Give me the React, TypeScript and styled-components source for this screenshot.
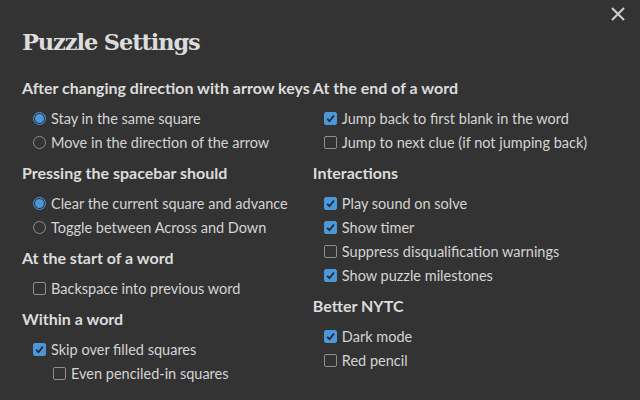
import styled, { createGlobalStyle } from "styled-components";

const GlobalStyle = createGlobalStyle`
    html, body {
        margin: 0;
        padding: 0;
        background: #333333;
    }
`

const Modal = styled.div`
    position: relative;
    box-sizing: border-box;
    width: 640px;
    height: 400px;
    background: #333333;
    color: #dcdcdc;
    padding: 25px 22px 0 22px;
    font-family: Lato, "Liberation Sans", sans-serif;
    overflow: hidden;
`

const Close = styled.button`
    position: absolute;
    top: 6px;
    right: 14px;
    width: 16px;
    height: 16px;
    padding: 0;
    border: none;
    background: transparent;
    cursor: pointer;
`

const Title = styled.h1`
    margin: 0 0 17px 0;
    font-family: "DejaVu Serif", serif;
    font-weight: 700;
    font-size: 22.5px;
    letter-spacing: -1.1px;
    line-height: 34px;
    color: #dcdcdc;
`

const Columns = styled.div`
    display: flex;
    flex-direction: row;
    align-items: flex-start;
    gap: 3px;
`

const Column = styled.div`
    display: flex;
    flex-direction: column;
`

const Heading = styled.h2`
    margin: 0;
    font-family: Lato, "Liberation Sans", sans-serif;
    font-weight: 700;
    font-size: 16px;
    line-height: 24px;
    color: #dcdcdc;
    white-space: nowrap;
`

const Group = styled.div`
    display: flex;
    flex-direction: column;
    padding: 6px 0 7px 11px;
`

const Option = styled.label<{ $nested?: boolean }>`
    display: flex;
    flex-direction: row;
    align-items: center;
    gap: 5px;
    height: 24px;
    margin-left: ${p => p.$nested ? "20px" : "0"};
    font-size: 14.5px;
    color: #d4d4d4;
    white-space: nowrap;
`

const Box = styled.span<{ $checked?: boolean }>`
    box-sizing: border-box;
    display: inline-flex;
    align-items: center;
    justify-content: center;
    width: 13px;
    height: 13px;
    border-radius: 2px;
    border: 1px solid ${p => p.$checked ? "#4b97d9" : "#8f8f8f"};
    background: ${p => p.$checked ? "#4b97d9" : "transparent"};
    flex-shrink: 0;
`

const Radio = styled.span<{ $checked?: boolean }>`
    box-sizing: border-box;
    display: inline-flex;
    align-items: center;
    justify-content: center;
    width: 13px;
    height: 13px;
    border-radius: 50%;
    border: 1px solid ${p => p.$checked ? "#4b97d9" : "#8f8f8f"};
    flex-shrink: 0;

    &::after {
        content: "";
        display: ${p => p.$checked ? "block" : "none"};
        width: 9px;
        height: 9px;
        border-radius: 50%;
        background: #4b97d9;
    }
`

type Item = { label: string, checked?: boolean, nested?: boolean }
type Section = { title: string, kind: "radio" | "check", items: Item[] }

const left: Section[] = [
    { title: "After changing direction with arrow keys", kind: "radio", items: [
        { label: "Stay in the same square", checked: true },
        { label: "Move in the direction of the arrow" },
    ]},
    { title: "Pressing the spacebar should", kind: "radio", items: [
        { label: "Clear the current square and advance", checked: true },
        { label: "Toggle between Across and Down" },
    ]},
    { title: "At the start of a word", kind: "check", items: [
        { label: "Backspace into previous word" },
    ]},
    { title: "Within a word", kind: "check", items: [
        { label: "Skip over filled squares", checked: true },
        { label: "Even penciled-in squares", nested: true },
    ]},
]

const right: Section[] = [
    { title: "At the end of a word", kind: "check", items: [
        { label: "Jump back to first blank in the word", checked: true },
        { label: "Jump to next clue (if not jumping back)" },
    ]},
    { title: "Interactions", kind: "check", items: [
        { label: "Play sound on solve", checked: true },
        { label: "Show timer", checked: true },
        { label: "Suppress disqualification warnings" },
        { label: "Show puzzle milestones", checked: true },
    ]},
    { title: "Better NYTC", kind: "check", items: [
        { label: "Dark mode", checked: true },
        { label: "Red pencil" },
    ]},
]

const Check = () => (
    <svg width="9" height="9" viewBox="0 0 9 9">
        <path d="M1.2 4.8 L3.5 7.2 L7.9 1.6" fill="none" stroke="#1f2a36" strokeWidth="1.8" />
    </svg>
)

const SectionBlock = ({ section }: { section: Section }) => (
    <>
        <Heading>{section.title}</Heading>
        <Group>
            {section.items.map(item => (
                <Option key={item.label} $nested={item.nested}>
                    {section.kind === "radio"
                        ? <Radio $checked={item.checked} />
                        : <Box $checked={item.checked}>{item.checked && <Check />}</Box>}
                    {item.label}
                </Option>
            ))}
        </Group>
    </>
)

const App = () => {
    return (
    <>
        <GlobalStyle />
        <Modal>
            <Close aria-label="Close">
                <svg width="16" height="16" viewBox="0 0 16 16">
                    <path d="M2 2 L14 14 M14 2 L2 14" stroke="#cfcfcf" strokeWidth="2" />
                </svg>
            </Close>
            <Title>Puzzle Settings</Title>
            <Columns>
                <Column>
                    {left.map(s => <SectionBlock key={s.title} section={s} />)}
                </Column>
                <Column>
                    {right.map(s => <SectionBlock key={s.title} section={s} />)}
                </Column>
            </Columns>
        </Modal>
    </>
    )
}

export default App;
